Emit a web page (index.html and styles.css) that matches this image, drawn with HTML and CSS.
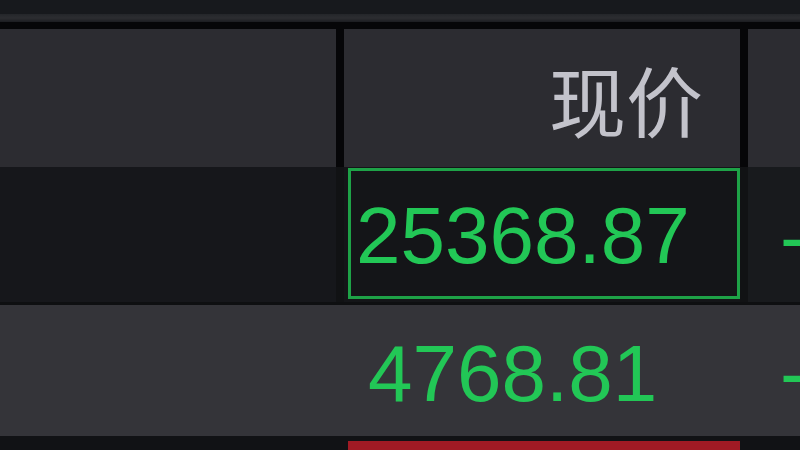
FILE: index.html
```html
<!DOCTYPE html>
<html lang="zh">
<head>
<meta charset="utf-8">
<title>行情</title>
<link rel="stylesheet" href="styles.css">
</head>
<body>
<div class="screen">
  <div class="topbar"></div>
  <div class="topline"></div>
  <div class="sep"></div>
  <div class="row head">
    <div class="cell"></div>
    <div class="cell hcell">现价</div>
    <div class="cell"></div>
  </div>
  <div class="row r1">
    <div class="cell c-dark"></div>
    <div class="cell c-box"><div class="box price">25368.87</div></div>
    <div class="cell c-dark2 dash">-</div>
  </div>
  <div class="rowsep"></div>
  <div class="row r2">
    <div class="cell"></div>
    <div class="cell price p2">4768.81</div>
    <div class="cell dash">-</div>
  </div>
  <div class="rowsep2"></div>
  <div class="row r3">
    <div class="cell"></div>
    <div class="cell red"></div>
    <div class="cell"></div>
  </div>
</div>
</body>
</html>
```
FILE: styles.css
```css
html, body {
  margin: 0;
  padding: 0;
  background: #0b0c0e;
  overflow: hidden;
}
.screen {
  width: 800px;
  height: 450px;
  display: flex;
  flex-direction: column;
  font-family: "Liberation Sans", Arial, sans-serif;
}
.topbar { height: 14px; background: #17191d; flex: none; }
.topline { height: 8px; background: linear-gradient(#24262a, #2c2d31 50%, #1c1d21); flex: none; }
.sep { height: 7px; background: #060608; flex: none; }
.row {
  display: grid;
  grid-template-columns: 336px 396px 1fr;
  column-gap: 8px;
  flex: none;
}
.head { height: 138px; background: #060608; }
.head .cell { background: #2c2c31; }
.hcell {
  font-family: "Noto Sans CJK SC", sans-serif;
  font-size: 77px;
  color: #c3c3cb;
  display: flex;
  align-items: center;
  justify-content: flex-end;
  padding-right: 37px;
  line-height: 1;
  padding-top: 0;
}
.r1 { height: 135px; background: #111214; }
.c-dark { background: #16171b; }
.c-dark2 { background: #181a1d; }
.c-box { background: #141518; padding: 1px 0 3px 4px; }
.box {
  height: 100%;
  box-sizing: border-box;
  border: 3px solid #1ea247;
  background: #141518;
  display: flex;
  align-items: center;
  padding: 4px 0 0 5px;
}
.price {
  font-size: 80px;
  line-height: 1;
  color: #22c756;
}
.dash {
  font-size: 80px;
  line-height: 1;
  color: #22c756;
  display: flex;
  align-items: center;
  padding-left: 32px;
  padding-top: 4px;
  overflow: hidden;
  white-space: nowrap;
}
.rowsep { height: 3px; background: #0e0f11; flex: none; }
.r2 { height: 131px; background: #343439; }
.p2 {
  display: flex;
  align-items: center;
  padding-left: 24px;
  padding-top: 6px;
}
.rowsep2 { height: 5px; background: #111215; flex: none; }
.r3 { flex: 1; background: #111215; }
.red { background: #a01a24; margin-left: 4px; }
```
